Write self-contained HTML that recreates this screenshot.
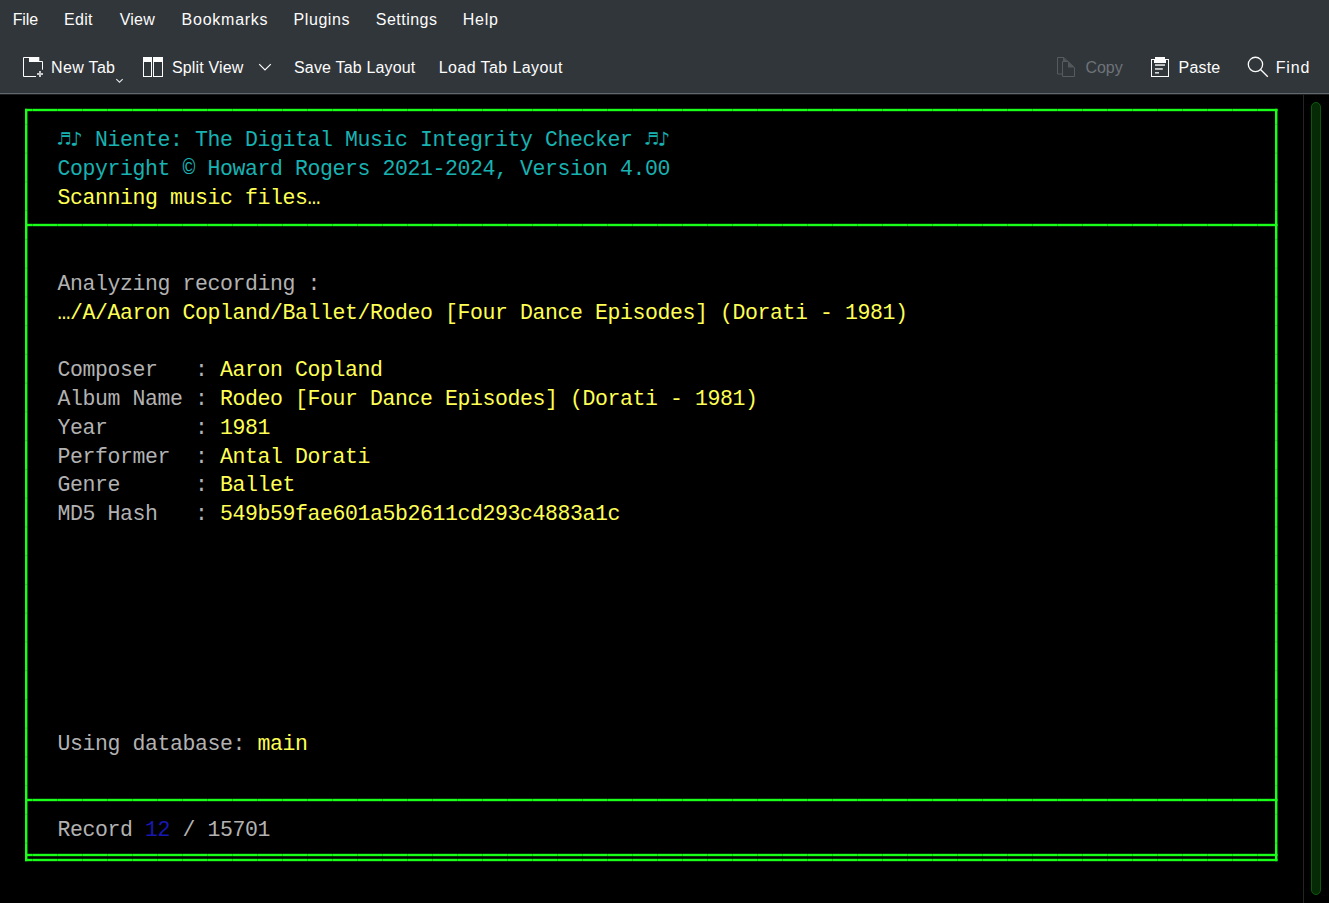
<!DOCTYPE html>
<html lang="en"><head><meta charset="utf-8"><title>Niente — Konsole</title>
<style>
html,body{margin:0;padding:0;background:#000;}
body{width:1329px;height:903px;position:relative;overflow:hidden;font-family:"Liberation Sans","DejaVu Sans",sans-serif;}
#chrome{position:absolute;left:0;top:0;width:1329px;height:93px;background:#31363b;}
#chromeline{position:absolute;left:0;top:93px;width:1329px;height:1px;background:#63686c;border-bottom:1px solid #1c1f21;}
.m,.t{position:absolute;height:20px;line-height:20px;font-size:16px;color:#fcfcfc;white-space:pre;}
.m{top:10.4px;} .t{top:58.4px;}
.t.dis{color:#6e7378;}
svg{position:absolute;overflow:visible;}
.r{position:absolute;height:28.75px;line-height:28.75px;font-family:"Liberation Mono","DejaVu Sans Mono",monospace;font-size:21.5px;letter-spacing:-0.4021px;white-space:pre;font-kerning:none;font-variant-ligatures:none;}
.n{font-family:"DejaVu Sans Mono","Liberation Mono",monospace;font-size:20.5px;letter-spacing:0.159px;line-height:0;}
.c{color:#18b2b2;} .y{color:#ffff54;} .g{color:#b2b2b2;} .b{color:#1818b2;}
#vdiv{position:absolute;left:1303px;top:95px;width:1px;height:808px;background:#242424;}
#sb{position:absolute;left:1311px;top:102px;width:8px;height:791px;border:1px solid #0b5a0b;background:#062a06;border-radius:5px;}
</style></head><body>
<div id="chrome"></div><div id="chromeline"></div>
<div class="m" style="left:12.7px;letter-spacing:-0.128px">File</div><div class="m" style="left:64px;letter-spacing:0.292px">Edit</div><div class="m" style="left:119.8px;letter-spacing:0.188px">View</div><div class="m" style="left:181.6px;letter-spacing:0.747px">Bookmarks</div><div class="m" style="left:293.6px;letter-spacing:0.554px">Plugins</div><div class="m" style="left:375.8px;letter-spacing:0.47px">Settings</div><div class="m" style="left:462.7px;letter-spacing:0.764px">Help</div>
<div class="t" style="left:51.1px;letter-spacing:0.325px">New Tab</div><div class="t" style="left:171.9px;letter-spacing:0.166px">Split View</div><div class="t" style="left:294.0px;letter-spacing:0.168px">Save Tab Layout</div><div class="t" style="left:438.8px;letter-spacing:0.402px">Load Tab Layout</div><div class="t dis" style="left:1085.4px;letter-spacing:-0.017px">Copy</div><div class="t" style="left:1178.6px;letter-spacing:0.171px">Paste</div><div class="t" style="left:1275.8px;letter-spacing:0.791px">Find</div>
<svg id="icons" width="1329" height="94" viewBox="0 0 1329 94" style="left:0;top:0">
<g fill="none" stroke="#fcfcfc" stroke-width="1">
 <!-- new tab -->
 <path d="M36 76.5H23.5V57.5H39M39 61.5H42.5V69.7"/>
 <rect x="29" y="57" width="10.3" height="5" fill="#fcfcfc" stroke="none"/>
 <path d="M37 74H43M40 71V77" stroke-width="2" stroke="#c6c7c9"/>
 <path d="M116.3 79.2L119.5 82.2L122.7 79.2" stroke-width="1.1" stroke="#e4e5e6"/>
 <!-- split view -->
 <rect x="143.5" y="57.5" width="8" height="19"/>
 <rect x="153.5" y="57.5" width="9" height="19"/>
 <rect x="143" y="57" width="9" height="5" fill="#fcfcfc" stroke="none"/>
 <rect x="153" y="57" width="10" height="5" fill="#fcfcfc" stroke="none"/>
 <path d="M259.2 64.2L265 70L270.8 64.2" stroke-width="1.2"/>
 <!-- paste -->
 <rect x="1151.5" y="59.5" width="17" height="17"/>
 <path d="M1155 57H1165V59H1166V63H1154V59H1155Z" fill="#fcfcfc" stroke="none"/>
 <g stroke="none" fill="#d6d7d8"><rect x="1155" y="64.2" width="10" height="1.7"/><rect x="1155" y="68.1" width="7.8" height="1.7"/><rect x="1155" y="72" width="4" height="1.6"/></g>
 <!-- find -->
 <circle cx="1255.45" cy="64.4" r="7.15" stroke-width="1.3"/>
 <path d="M1260.5 69.5L1267.8 76.7" stroke-width="1.35"/>
</g>
<g fill="none" stroke="#575b5f" stroke-width="1">
 <!-- copy (disabled) -->
 <path d="M1062 74H1057.5V57.5H1064L1068 61.5"/>
 <path d="M1063 57.5V62H1068Z" fill="#54585c" stroke="none"/>
 <path d="M1062.5 61.5H1068L1074.5 67.5V76.5H1062.5Z"/>
 <path d="M1068 61.5V67.5H1074.5Z" fill="#54585c" stroke="none"/>
</g>
</svg>
<div id="vdiv"></div><div id="sb"></div>
<svg id="box" width="1329" height="903" viewBox="0 0 1329 903" style="left:0;top:0"><g fill="#1aff1a"><rect x="25" y="108.8" width="1252.5" height="2.4"/><rect x="25" y="223.8" width="1252.5" height="2.4"/><rect x="25" y="798.8" width="1252.5" height="2.4"/><rect x="25" y="853.8" width="1252.5" height="2.4"/><rect x="25" y="858.8" width="1252.5" height="2.4"/><rect x="25" y="108.8" width="2.45" height="752.4000000000001"/><rect x="1275" y="108.8" width="2.45" height="752.4000000000001"/></g><g fill="#000" fill-opacity="0.2"><rect x="32.0" y="108" width="1" height="4"/><rect x="32.0" y="223" width="1" height="4"/><rect x="32.0" y="798" width="1" height="4"/><rect x="32.0" y="853" width="1" height="4"/><rect x="32.0" y="858" width="1" height="4"/><rect x="57.0" y="108" width="1" height="4"/><rect x="57.0" y="223" width="1" height="4"/><rect x="57.0" y="798" width="1" height="4"/><rect x="57.0" y="853" width="1" height="4"/><rect x="57.0" y="858" width="1" height="4"/><rect x="82.0" y="108" width="1" height="4"/><rect x="82.0" y="223" width="1" height="4"/><rect x="82.0" y="798" width="1" height="4"/><rect x="82.0" y="853" width="1" height="4"/><rect x="82.0" y="858" width="1" height="4"/><rect x="107.0" y="108" width="1" height="4"/><rect x="107.0" y="223" width="1" height="4"/><rect x="107.0" y="798" width="1" height="4"/><rect x="107.0" y="853" width="1" height="4"/><rect x="107.0" y="858" width="1" height="4"/><rect x="132.0" y="108" width="1" height="4"/><rect x="132.0" y="223" width="1" height="4"/><rect x="132.0" y="798" width="1" height="4"/><rect x="132.0" y="853" width="1" height="4"/><rect x="132.0" y="858" width="1" height="4"/><rect x="157.0" y="108" width="1" height="4"/><rect x="157.0" y="223" width="1" height="4"/><rect x="157.0" y="798" width="1" height="4"/><rect x="157.0" y="853" width="1" height="4"/><rect x="157.0" y="858" width="1" height="4"/><rect x="182.0" y="108" width="1" height="4"/><rect x="182.0" y="223" width="1" height="4"/><rect x="182.0" y="798" width="1" height="4"/><rect x="182.0" y="853" width="1" height="4"/><rect x="182.0" y="858" width="1" height="4"/><rect x="207.0" y="108" width="1" height="4"/><rect x="207.0" y="223" width="1" height="4"/><rect x="207.0" y="798" width="1" height="4"/><rect x="207.0" y="853" width="1" height="4"/><rect x="207.0" y="858" width="1" height="4"/><rect x="232.0" y="108" width="1" height="4"/><rect x="232.0" y="223" width="1" height="4"/><rect x="232.0" y="798" width="1" height="4"/><rect x="232.0" y="853" width="1" height="4"/><rect x="232.0" y="858" width="1" height="4"/><rect x="257.0" y="108" width="1" height="4"/><rect x="257.0" y="223" width="1" height="4"/><rect x="257.0" y="798" width="1" height="4"/><rect x="257.0" y="853" width="1" height="4"/><rect x="257.0" y="858" width="1" height="4"/><rect x="282.0" y="108" width="1" height="4"/><rect x="282.0" y="223" width="1" height="4"/><rect x="282.0" y="798" width="1" height="4"/><rect x="282.0" y="853" width="1" height="4"/><rect x="282.0" y="858" width="1" height="4"/><rect x="307.0" y="108" width="1" height="4"/><rect x="307.0" y="223" width="1" height="4"/><rect x="307.0" y="798" width="1" height="4"/><rect x="307.0" y="853" width="1" height="4"/><rect x="307.0" y="858" width="1" height="4"/><rect x="332.0" y="108" width="1" height="4"/><rect x="332.0" y="223" width="1" height="4"/><rect x="332.0" y="798" width="1" height="4"/><rect x="332.0" y="853" width="1" height="4"/><rect x="332.0" y="858" width="1" height="4"/><rect x="357.0" y="108" width="1" height="4"/><rect x="357.0" y="223" width="1" height="4"/><rect x="357.0" y="798" width="1" height="4"/><rect x="357.0" y="853" width="1" height="4"/><rect x="357.0" y="858" width="1" height="4"/><rect x="382.0" y="108" width="1" height="4"/><rect x="382.0" y="223" width="1" height="4"/><rect x="382.0" y="798" width="1" height="4"/><rect x="382.0" y="853" width="1" height="4"/><rect x="382.0" y="858" width="1" height="4"/><rect x="407.0" y="108" width="1" height="4"/><rect x="407.0" y="223" width="1" height="4"/><rect x="407.0" y="798" width="1" height="4"/><rect x="407.0" y="853" width="1" height="4"/><rect x="407.0" y="858" width="1" height="4"/><rect x="432.0" y="108" width="1" height="4"/><rect x="432.0" y="223" width="1" height="4"/><rect x="432.0" y="798" width="1" height="4"/><rect x="432.0" y="853" width="1" height="4"/><rect x="432.0" y="858" width="1" height="4"/><rect x="457.0" y="108" width="1" height="4"/><rect x="457.0" y="223" width="1" height="4"/><rect x="457.0" y="798" width="1" height="4"/><rect x="457.0" y="853" width="1" height="4"/><rect x="457.0" y="858" width="1" height="4"/><rect x="482.0" y="108" width="1" height="4"/><rect x="482.0" y="223" width="1" height="4"/><rect x="482.0" y="798" width="1" height="4"/><rect x="482.0" y="853" width="1" height="4"/><rect x="482.0" y="858" width="1" height="4"/><rect x="507.0" y="108" width="1" height="4"/><rect x="507.0" y="223" width="1" height="4"/><rect x="507.0" y="798" width="1" height="4"/><rect x="507.0" y="853" width="1" height="4"/><rect x="507.0" y="858" width="1" height="4"/><rect x="532.0" y="108" width="1" height="4"/><rect x="532.0" y="223" width="1" height="4"/><rect x="532.0" y="798" width="1" height="4"/><rect x="532.0" y="853" width="1" height="4"/><rect x="532.0" y="858" width="1" height="4"/><rect x="557.0" y="108" width="1" height="4"/><rect x="557.0" y="223" width="1" height="4"/><rect x="557.0" y="798" width="1" height="4"/><rect x="557.0" y="853" width="1" height="4"/><rect x="557.0" y="858" width="1" height="4"/><rect x="582.0" y="108" width="1" height="4"/><rect x="582.0" y="223" width="1" height="4"/><rect x="582.0" y="798" width="1" height="4"/><rect x="582.0" y="853" width="1" height="4"/><rect x="582.0" y="858" width="1" height="4"/><rect x="607.0" y="108" width="1" height="4"/><rect x="607.0" y="223" width="1" height="4"/><rect x="607.0" y="798" width="1" height="4"/><rect x="607.0" y="853" width="1" height="4"/><rect x="607.0" y="858" width="1" height="4"/><rect x="632.0" y="108" width="1" height="4"/><rect x="632.0" y="223" width="1" height="4"/><rect x="632.0" y="798" width="1" height="4"/><rect x="632.0" y="853" width="1" height="4"/><rect x="632.0" y="858" width="1" height="4"/><rect x="657.0" y="108" width="1" height="4"/><rect x="657.0" y="223" width="1" height="4"/><rect x="657.0" y="798" width="1" height="4"/><rect x="657.0" y="853" width="1" height="4"/><rect x="657.0" y="858" width="1" height="4"/><rect x="682.0" y="108" width="1" height="4"/><rect x="682.0" y="223" width="1" height="4"/><rect x="682.0" y="798" width="1" height="4"/><rect x="682.0" y="853" width="1" height="4"/><rect x="682.0" y="858" width="1" height="4"/><rect x="707.0" y="108" width="1" height="4"/><rect x="707.0" y="223" width="1" height="4"/><rect x="707.0" y="798" width="1" height="4"/><rect x="707.0" y="853" width="1" height="4"/><rect x="707.0" y="858" width="1" height="4"/><rect x="732.0" y="108" width="1" height="4"/><rect x="732.0" y="223" width="1" height="4"/><rect x="732.0" y="798" width="1" height="4"/><rect x="732.0" y="853" width="1" height="4"/><rect x="732.0" y="858" width="1" height="4"/><rect x="757.0" y="108" width="1" height="4"/><rect x="757.0" y="223" width="1" height="4"/><rect x="757.0" y="798" width="1" height="4"/><rect x="757.0" y="853" width="1" height="4"/><rect x="757.0" y="858" width="1" height="4"/><rect x="782.0" y="108" width="1" height="4"/><rect x="782.0" y="223" width="1" height="4"/><rect x="782.0" y="798" width="1" height="4"/><rect x="782.0" y="853" width="1" height="4"/><rect x="782.0" y="858" width="1" height="4"/><rect x="807.0" y="108" width="1" height="4"/><rect x="807.0" y="223" width="1" height="4"/><rect x="807.0" y="798" width="1" height="4"/><rect x="807.0" y="853" width="1" height="4"/><rect x="807.0" y="858" width="1" height="4"/><rect x="832.0" y="108" width="1" height="4"/><rect x="832.0" y="223" width="1" height="4"/><rect x="832.0" y="798" width="1" height="4"/><rect x="832.0" y="853" width="1" height="4"/><rect x="832.0" y="858" width="1" height="4"/><rect x="857.0" y="108" width="1" height="4"/><rect x="857.0" y="223" width="1" height="4"/><rect x="857.0" y="798" width="1" height="4"/><rect x="857.0" y="853" width="1" height="4"/><rect x="857.0" y="858" width="1" height="4"/><rect x="882.0" y="108" width="1" height="4"/><rect x="882.0" y="223" width="1" height="4"/><rect x="882.0" y="798" width="1" height="4"/><rect x="882.0" y="853" width="1" height="4"/><rect x="882.0" y="858" width="1" height="4"/><rect x="907.0" y="108" width="1" height="4"/><rect x="907.0" y="223" width="1" height="4"/><rect x="907.0" y="798" width="1" height="4"/><rect x="907.0" y="853" width="1" height="4"/><rect x="907.0" y="858" width="1" height="4"/><rect x="932.0" y="108" width="1" height="4"/><rect x="932.0" y="223" width="1" height="4"/><rect x="932.0" y="798" width="1" height="4"/><rect x="932.0" y="853" width="1" height="4"/><rect x="932.0" y="858" width="1" height="4"/><rect x="957.0" y="108" width="1" height="4"/><rect x="957.0" y="223" width="1" height="4"/><rect x="957.0" y="798" width="1" height="4"/><rect x="957.0" y="853" width="1" height="4"/><rect x="957.0" y="858" width="1" height="4"/><rect x="982.0" y="108" width="1" height="4"/><rect x="982.0" y="223" width="1" height="4"/><rect x="982.0" y="798" width="1" height="4"/><rect x="982.0" y="853" width="1" height="4"/><rect x="982.0" y="858" width="1" height="4"/><rect x="1007.0" y="108" width="1" height="4"/><rect x="1007.0" y="223" width="1" height="4"/><rect x="1007.0" y="798" width="1" height="4"/><rect x="1007.0" y="853" width="1" height="4"/><rect x="1007.0" y="858" width="1" height="4"/><rect x="1032.0" y="108" width="1" height="4"/><rect x="1032.0" y="223" width="1" height="4"/><rect x="1032.0" y="798" width="1" height="4"/><rect x="1032.0" y="853" width="1" height="4"/><rect x="1032.0" y="858" width="1" height="4"/><rect x="1057.0" y="108" width="1" height="4"/><rect x="1057.0" y="223" width="1" height="4"/><rect x="1057.0" y="798" width="1" height="4"/><rect x="1057.0" y="853" width="1" height="4"/><rect x="1057.0" y="858" width="1" height="4"/><rect x="1082.0" y="108" width="1" height="4"/><rect x="1082.0" y="223" width="1" height="4"/><rect x="1082.0" y="798" width="1" height="4"/><rect x="1082.0" y="853" width="1" height="4"/><rect x="1082.0" y="858" width="1" height="4"/><rect x="1107.0" y="108" width="1" height="4"/><rect x="1107.0" y="223" width="1" height="4"/><rect x="1107.0" y="798" width="1" height="4"/><rect x="1107.0" y="853" width="1" height="4"/><rect x="1107.0" y="858" width="1" height="4"/><rect x="1132.0" y="108" width="1" height="4"/><rect x="1132.0" y="223" width="1" height="4"/><rect x="1132.0" y="798" width="1" height="4"/><rect x="1132.0" y="853" width="1" height="4"/><rect x="1132.0" y="858" width="1" height="4"/><rect x="1157.0" y="108" width="1" height="4"/><rect x="1157.0" y="223" width="1" height="4"/><rect x="1157.0" y="798" width="1" height="4"/><rect x="1157.0" y="853" width="1" height="4"/><rect x="1157.0" y="858" width="1" height="4"/><rect x="1182.0" y="108" width="1" height="4"/><rect x="1182.0" y="223" width="1" height="4"/><rect x="1182.0" y="798" width="1" height="4"/><rect x="1182.0" y="853" width="1" height="4"/><rect x="1182.0" y="858" width="1" height="4"/><rect x="1207.0" y="108" width="1" height="4"/><rect x="1207.0" y="223" width="1" height="4"/><rect x="1207.0" y="798" width="1" height="4"/><rect x="1207.0" y="853" width="1" height="4"/><rect x="1207.0" y="858" width="1" height="4"/><rect x="1232.0" y="108" width="1" height="4"/><rect x="1232.0" y="223" width="1" height="4"/><rect x="1232.0" y="798" width="1" height="4"/><rect x="1232.0" y="853" width="1" height="4"/><rect x="1232.0" y="858" width="1" height="4"/><rect x="1257.0" y="108" width="1" height="4"/><rect x="1257.0" y="223" width="1" height="4"/><rect x="1257.0" y="798" width="1" height="4"/><rect x="1257.0" y="853" width="1" height="4"/><rect x="1257.0" y="858" width="1" height="4"/></g><g fill="#000" fill-opacity="0.12"><rect x="25" y="123.875" width="3" height="1"/><rect x="1275" y="123.875" width="3" height="1"/><rect x="25" y="152.625" width="3" height="1"/><rect x="1275" y="152.625" width="3" height="1"/><rect x="25" y="181.375" width="3" height="1"/><rect x="1275" y="181.375" width="3" height="1"/><rect x="25" y="210.125" width="3" height="1"/><rect x="1275" y="210.125" width="3" height="1"/><rect x="25" y="238.875" width="3" height="1"/><rect x="1275" y="238.875" width="3" height="1"/><rect x="25" y="267.625" width="3" height="1"/><rect x="1275" y="267.625" width="3" height="1"/><rect x="25" y="296.375" width="3" height="1"/><rect x="1275" y="296.375" width="3" height="1"/><rect x="25" y="325.125" width="3" height="1"/><rect x="1275" y="325.125" width="3" height="1"/><rect x="25" y="353.875" width="3" height="1"/><rect x="1275" y="353.875" width="3" height="1"/><rect x="25" y="382.625" width="3" height="1"/><rect x="1275" y="382.625" width="3" height="1"/><rect x="25" y="411.375" width="3" height="1"/><rect x="1275" y="411.375" width="3" height="1"/><rect x="25" y="440.125" width="3" height="1"/><rect x="1275" y="440.125" width="3" height="1"/><rect x="25" y="468.875" width="3" height="1"/><rect x="1275" y="468.875" width="3" height="1"/><rect x="25" y="497.625" width="3" height="1"/><rect x="1275" y="497.625" width="3" height="1"/><rect x="25" y="526.375" width="3" height="1"/><rect x="1275" y="526.375" width="3" height="1"/><rect x="25" y="555.125" width="3" height="1"/><rect x="1275" y="555.125" width="3" height="1"/><rect x="25" y="583.875" width="3" height="1"/><rect x="1275" y="583.875" width="3" height="1"/><rect x="25" y="612.625" width="3" height="1"/><rect x="1275" y="612.625" width="3" height="1"/><rect x="25" y="641.375" width="3" height="1"/><rect x="1275" y="641.375" width="3" height="1"/><rect x="25" y="670.125" width="3" height="1"/><rect x="1275" y="670.125" width="3" height="1"/><rect x="25" y="698.875" width="3" height="1"/><rect x="1275" y="698.875" width="3" height="1"/><rect x="25" y="727.625" width="3" height="1"/><rect x="1275" y="727.625" width="3" height="1"/><rect x="25" y="756.375" width="3" height="1"/><rect x="1275" y="756.375" width="3" height="1"/><rect x="25" y="785.125" width="3" height="1"/><rect x="1275" y="785.125" width="3" height="1"/><rect x="25" y="813.875" width="3" height="1"/><rect x="1275" y="813.875" width="3" height="1"/><rect x="25" y="842.625" width="3" height="1"/><rect x="1275" y="842.625" width="3" height="1"/></g></svg>
<div class="r" style="top:125.925px;left:57.50px"><span class="c"><span class="n">♬♪</span> Niente: The Digital Music Integrity Checker <span class="n">♬♪</span></span></div>
<div class="r" style="top:154.925px;left:57.50px"><span class="c">Copyright © Howard Rogers 2021-2024, Version 4.00</span></div>
<div class="r" style="top:183.925px;left:57.50px"><span class="y">Scanning music files…</span></div>
<div class="r" style="top:269.925px;left:57.50px"><span class="g">Analyzing recording :</span></div>
<div class="r" style="top:298.925px;left:57.50px"><span class="y">…/A/Aaron Copland/Ballet/Rodeo [Four Dance Episodes] (Dorati - 1981)</span></div>
<div class="r" style="top:355.925px;left:57.50px"><span class="g">Composer   : </span><span class="y">Aaron Copland</span></div>
<div class="r" style="top:384.925px;left:57.50px"><span class="g">Album Name : </span><span class="y">Rodeo [Four Dance Episodes] (Dorati - 1981)</span></div>
<div class="r" style="top:413.925px;left:57.50px"><span class="g">Year       : </span><span class="y">1981</span></div>
<div class="r" style="top:442.925px;left:57.50px"><span class="g">Performer  : </span><span class="y">Antal Dorati</span></div>
<div class="r" style="top:470.925px;left:57.50px"><span class="g">Genre      : </span><span class="y">Ballet</span></div>
<div class="r" style="top:499.925px;left:57.50px"><span class="g">MD5 Hash   : </span><span class="y">549b59fae601a5b2611cd293c4883a1c</span></div>
<div class="r" style="top:729.925px;left:57.50px"><span class="g">Using database: </span><span class="y">main</span></div>
<div class="r" style="top:815.925px;left:57.50px"><span class="g">Record </span><span class="b">12</span><span class="g"> / 15701</span></div>
</body></html>
